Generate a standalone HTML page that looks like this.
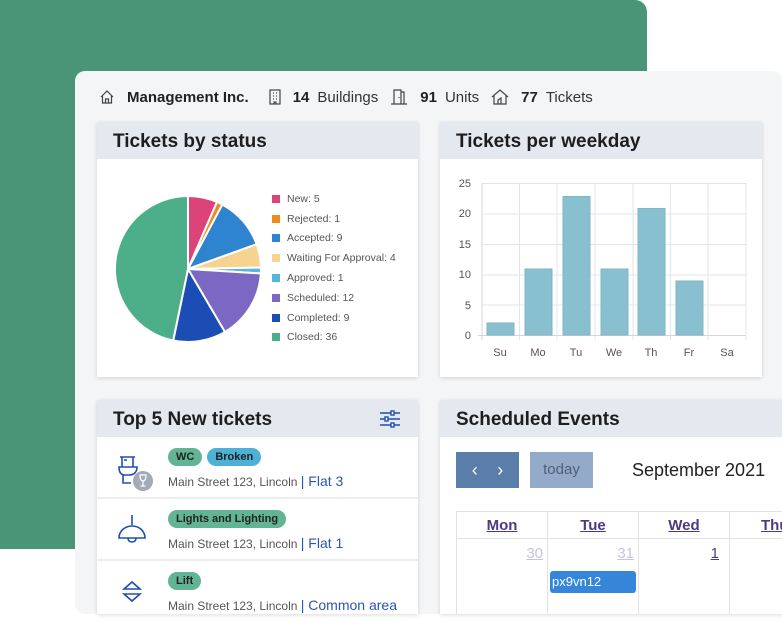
<!DOCTYPE html>
<html><head><meta charset="utf-8"><style>
*{box-sizing:border-box;margin:0;padding:0}
body{width:782px;height:636px;background:#fff;position:relative;overflow:hidden;font-family:"Liberation Sans",sans-serif;color:#222}
.green{position:absolute;left:0;top:0;width:647px;height:549px;background:#4a9477;border-radius:0 12px 10px 0}
.panel{position:absolute;left:75px;top:71px;width:707px;height:543px;background:#f4f5f7;border-radius:10px}
.top{position:absolute;left:99px;top:86px;height:22px;display:flex;align-items:center;font-size:15px;color:#333}
.top b{color:#222;margin-right:8px}
.top span{margin-right:12px}
.top svg{margin-right:12px}
.card{position:absolute;background:#fff;box-shadow:0 1px 4px rgba(0,0,0,.15)}
.hd{height:37px;background:#e4e8ef;font-weight:bold;font-size:19px;padding:9px 0 0 16px;color:#1e1e1e}
.leg{position:absolute;left:175px;font-size:10.5px;color:#555}
.leg div{height:19.8px;display:flex;align-items:center}
.leg i{width:8px;height:8px;display:inline-block;margin-right:7px}
.row{height:62px;border-bottom:2px solid #ecedf0;position:relative}
.tag{display:inline-block;border-radius:10px;font-weight:bold;font-size:11px;padding:3px 8px;color:#222;margin-right:5px}
.g{background:#62b494}.b{background:#4cb1d4}
.addr{position:absolute;left:71px;font-size:12px;color:#555}
.addr em{font-style:normal;color:#2b55b0;font-size:14px}
.tags{position:absolute;left:71px;top:10px}
.ic{position:absolute;left:18px;top:14px}
td,th{border:1px solid #e2e2e2}
</style></head><body>
<div class="green"></div>
<div class="panel"></div>
<div class="top">
<svg width="16" height="16" viewBox="0 0 16 16" fill="none" stroke="#444" stroke-width="1.2"><path d="M2 8L8 2l6 6M3.5 6.5V14h9V6.5M6.5 14v-4h3v4"/></svg>
<b>Management Inc.</b><span></span>
<svg width="12" height="16" viewBox="0 0 12 16" fill="none" stroke="#444" stroke-width="1.2"><rect x="1" y="1" width="10" height="14"/><path d="M4 4h1M7 4h1M4 7h1M7 7h1M4 10h1M7 10h1M5 15v-2h2v2"/></svg>
<b>14</b><span>Buildings</span>
<svg width="18" height="16" viewBox="0 0 18 16" fill="none" stroke="#444" stroke-width="1.2"><path d="M1 15h16M4 15V1h7v14M11 3h3v12M9 8v1"/></svg>
<b>91</b><span>Units</span>
<svg width="18" height="16" viewBox="0 0 18 16" fill="none" stroke="#444" stroke-width="1.2"><path d="M1 8l8-7 8 7M3 6.5V15h12V6.5M7 15v-4l3-2v6"/></svg>
<b>77</b><span>Tickets</span>
</div>

<div class="card" style="left:97px;top:122px;width:321px;height:255px">
<div class="hd">Tickets by status</div>
<svg style="position:absolute;left:0;top:0" width="321" height="255" viewBox="97 122 321 255">
<g stroke="#fff" stroke-width="2" stroke-linejoin="round">
<path d="M188 269L188 196A73 73 0 0 1 216.97 202Z" fill="#db4379"/>
<path d="M188 269L216.97 202A73 73 0 0 1 222.33 204.58Z" fill="#f08a1c"/>
<path d="M188 269L222.33 204.58A73 73 0 0 1 256.66 244.19Z" fill="#2f84d0"/>
<path d="M188 269L256.66 244.19A73 73 0 0 1 260.99 267.51Z" fill="#f6d38e"/>
<path d="M188 269L260.99 267.51A73 73 0 0 1 260.86 273.47Z" fill="#55b7d9"/>
<path d="M188 269L260.86 273.47A73 73 0 0 1 224.93 331.97Z" fill="#7c68c2"/>
<path d="M188 269L224.93 331.97A73 73 0 0 1 173.21 340.49Z" fill="#1c4db4"/>
<path d="M188 269L173.21 340.49A73 73 0 0 1 188 196Z" fill="#4daf89"/>
</g></svg>
<div class="leg" style="top:67px">
<div><i style="background:#db4379"></i>New: 5</div>
<div><i style="background:#f08a1c"></i>Rejected: 1</div>
<div><i style="background:#2f84d0"></i>Accepted: 9</div>
<div><i style="background:#f6d38e"></i>Waiting For Approval: 4</div>
<div><i style="background:#55b7d9"></i>Approved: 1</div>
<div><i style="background:#7c68c2"></i>Scheduled: 12</div>
<div><i style="background:#1c4db4"></i>Completed: 9</div>
<div><i style="background:#4daf89"></i>Closed: 36</div>
</div>
</div>

<div class="card" style="left:440px;top:122px;width:322px;height:255px">
<div class="hd">Tickets per weekday</div>
<svg style="position:absolute;left:0;top:0" width="322" height="255" viewBox="440 122 322 255" font-family="Liberation Sans" font-size="11" fill="#555">
<g stroke="#e3e5ec" stroke-width="1">
<path d="M482 183.5H746M482 214H746M482 244.5H746M482 275H746M482 305H746"/>
<path d="M519.5 183V340M557 183V340M595 183V340M633 183V340M670.5 183V340M708 183V340M746 183V340"/>
</g>
<path d="M482 183V340M478 335.5H746" stroke="#d4d6de"/>
<g text-anchor="end"><text x="471" y="187">25</text><text x="471" y="217">20</text><text x="471" y="278">10</text><text x="471" y="248">15</text><text x="471" y="309">5</text><text x="471" y="339">0</text></g>
<g fill="#89c0cf" stroke="#7eb6c7">
<rect x="487" y="323" width="27" height="12"/>
<rect x="525" y="269" width="27" height="66"/>
<rect x="563" y="196.5" width="27" height="138.5"/>
<rect x="601" y="269" width="27" height="66"/>
<rect x="638" y="208.5" width="27" height="126.5"/>
<rect x="676" y="281" width="27" height="54"/>
</g>
<g text-anchor="middle"><text x="500" y="356">Su</text><text x="538" y="356">Mo</text><text x="576" y="356">Tu</text><text x="614" y="356">We</text><text x="651" y="356">Th</text><text x="689" y="356">Fr</text><text x="727" y="356">Sa</text></g>
</svg>
</div>

<div class="card" style="left:97px;top:400px;width:321px;height:214px;overflow:hidden">
<div class="hd">Top 5 New tickets</div>
<svg style="position:absolute;left:282px;top:10px" width="22" height="18" viewBox="0 0 22 18" fill="none" stroke="#1e4fb0" stroke-width="1.4"><path d="M1 3h20M1 9h20M1 15h20"/><rect x="12" y="1" width="3" height="4" fill="#fff"/><rect x="6" y="7" width="3" height="4" fill="#fff"/><rect x="12" y="13" width="3" height="4" fill="#fff"/></svg>
<div class="row">
<svg class="ic" width="40" height="40" viewBox="0 0 40 40" fill="none" stroke="#1e4fb0" stroke-width="1.6"><path d="M5 6h15M7 6v10M18 6v10M9 9h3M4 16h18c0 5-3 8-8 8H10c-4 0-6-3-6-8zM8 24v8h8"/><circle cx="28" cy="30" r="10" fill="#a4aab8" stroke="none"/><path d="M25 24h6c0 4-1 6-3 6s-3-2-3-6zM28 30v5M25.5 35h5" stroke="#fff" stroke-width="1.2"/></svg>
<div class="tags"><span class="tag g">WC</span><span class="tag b">Broken</span></div>
<div class="addr" style="top:36px">Main Street 123, Lincoln <em>| Flat 3</em></div>
</div>
<div class="row">
<svg class="ic" width="34" height="34" viewBox="0 0 34 34" fill="none" stroke="#1e4fb0" stroke-width="1.6"><path d="M17 2v10M4 25c0-7 6-12 13-12s13 5 13 12zM13 25c0 3 2 4 4 4s4-1 4-4"/></svg>
<div class="tags"><span class="tag g">Lights and Lighting</span></div>
<div class="addr" style="top:36px">Main Street 123, Lincoln <em>| Flat 1</em></div>
</div>
<div class="row">
<svg class="ic" style="top:16px" width="34" height="34" viewBox="0 0 34 34" fill="none" stroke="#1e4fb0" stroke-width="1.6"><path d="M9 12l8-7 8 7zM9 17l8 7 8-7z"/></svg>
<div class="tags"><span class="tag g">Lift</span></div>
<div class="addr" style="top:36px">Main Street 123, Lincoln <em>| Common area</em></div>
</div>
</div>

<div class="card" style="left:440px;top:400px;width:350px;height:214px;overflow:hidden">
<div class="hd">Scheduled Events</div>
<div style="position:absolute;left:16px;top:52px;width:63px;height:36px;background:#5a7ea9;color:#fff;font-size:18px;display:flex;justify-content:space-around;align-items:center;padding:0 6px"><span>‹</span><span>›</span></div>
<div style="position:absolute;left:90px;top:52px;width:63px;height:36px;background:#93abc8;color:#506078;font-size:15px;text-align:center;line-height:36px">today</div>
<div style="position:absolute;left:192px;top:60px;font-size:18px;color:#222">September 2021</div>
<table style="position:absolute;left:16px;top:111px;width:364px;table-layout:fixed;border-collapse:collapse;font-size:15px" cellspacing="0">
<tr style="height:27px">
<th style="width:91px;color:#4d3a85;text-decoration:underline">Mon</th>
<th style="width:91px;color:#4d3a85;text-decoration:underline">Tue</th>
<th style="width:91px;color:#4d3a85;text-decoration:underline">Wed</th>
<th style="width:91px;color:#4d3a85;text-decoration:underline;text-align:left;padding-left:31px">Thu</th></tr>
<tr style="height:76px;vertical-align:top">
<td style="text-align:right;padding:6px 4px;color:#c8c2dc;text-decoration:underline">30</td>
<td style="text-align:right;padding:6px 4px;color:#c8c2dc;text-decoration:underline;position:relative">31<div style="position:absolute;left:2px;top:32px;width:86px;height:22px;background:#3586d8;border-radius:3px;color:#fff;font-size:13px;text-align:left;padding:3px 2px;text-decoration:none">px9vn12</div></td>
<td style="text-align:right;padding:6px 10px;color:#4d3a85;text-decoration:underline">1</td>
<td></td></tr>
</table>
</div>
</body></html>
